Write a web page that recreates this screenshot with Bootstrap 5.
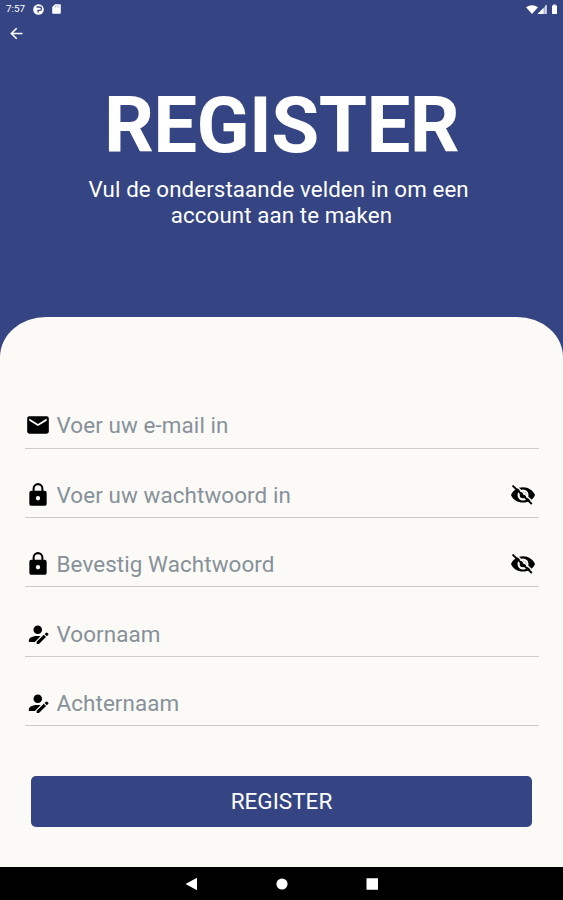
<!DOCTYPE html>
<html lang="nl">
<head>
<meta charset="utf-8">
<meta name="viewport" content="width=device-width, initial-scale=1">
<title>Register</title>
<link href="https://cdn.jsdelivr.net/npm/bootstrap@5.3.0/dist/css/bootstrap.min.css" rel="stylesheet">
<style>
body{font-family:Roboto,sans-serif;background:#354583;height:900px;overflow:hidden}
svg{display:block;flex:none}
.status{height:18px;padding:0 4px 0 6px;font-size:9.8px;line-height:18px}
.hero{height:298.5px}
.back{margin:9px 0 0 10px;width:13px;height:13px}
.title{font-size:78px;line-height:90px;font-weight:700;margin-top:41px;letter-spacing:-.6px}
.intro{font-size:22.3px;line-height:26.4px;margin-top:5px;letter-spacing:.1px}
.sheet{height:550.5px;background:#fbfaf6;border-radius:46px 46px 0 0/40px 40px 0 0;padding:62.7px 24.5px 0}
.field{height:69.4px;border-bottom:1.5px solid #cbcbc9;padding:24px 4px 0 0}
.field svg{margin-right:6px}
.field svg.eye{margin:0}
.field .form-control{font-size:22.4px;line-height:26px;color:#333;letter-spacing:.1px}
.field .form-control::placeholder{color:#87919a;opacity:1}
.submit{background:#354583!important;border-radius:5px;height:51.5px;margin:49.5px 6.5px 0;font-size:22.5px;width:501px;line-height:1}
.sysnav{height:33px}
</style>
<script src="https://cdn.jsdelivr.net/npm/bootstrap@5.3.0/dist/js/bootstrap.bundle.min.js"></script>
</head>
<body class="d-flex flex-column">
<svg width="0" height="0" class="position-absolute">
<symbol id="lock" viewBox="0 0 24 24"><path d="M18 8h-1V6A5 5 0 0 0 7 6v2H6a2 2 0 0 0-2 2v10a2 2 0 0 0 2 2h12a2 2 0 0 0 2-2V10a2 2 0 0 0-2-2zm-6 9a2 2 0 1 1 0-4 2 2 0 0 1 0 4zM8.900 8V6a3.100 3.100 0 0 1 6.200 0v2z"/></symbol>
<symbol id="person" viewBox="0 0 24 24"><circle cx="11.200" cy="6.300" r="4.700"/><path d="M1.500 19.500v-1.700c0-2.900 4.200-4.800 9.300-4.800 1.300 0 2.400.1 3.400.3L8 19.500z"/><path d="M10 21.800v-2.500l7.800-7.500 2.400 2.400-7.700 7.600zM18.600 11l1.700-1.500q.6-.5 1.200 0l1.200 1.200q.5.600 0 1.100L21.100 13.400z"/></symbol>
<symbol id="eyeoff" viewBox="0 0 24 20"><path fill-rule="evenodd" d="M0 10C2 5.300 6.500 2.200 12 2.200S22 5.300 24 10c-2 4.700-6.500 7.600-12 7.600S2 14.700 0 10zm12-5.500a5.500 5.500 0 1 0 0 11 5.500 5.500 0 0 0 0-11z"/><circle cx="12" cy="10" r="3.300"/><circle cx="13.300" cy="8.500" r="1.500" fill="#fbfaf6"/><path d="M3.300-.8 22.800 17.700" stroke="#fbfaf6" stroke-width="1.400"/><path d="M1.500.5 20.800 19" stroke="#000" stroke-width="1.800"/></symbol>
</svg>
<header class="status d-flex align-items-center text-white">
<span>7:57</span>
<svg width="11" height="11" viewBox="0 0 11 11" class="ms-2"><circle cx="5.500" cy="5.500" r="5.300" fill="#fff"/><path d="M3.500 3h3.300a1.700 1.700 0 0 1 0 3.400H5V8.500" fill="none" stroke="#354583" stroke-width="1.300"/></svg>
<svg width="9" height="10" viewBox="0 0 9 10" class="ms-2"><path d="M3 .3h5q.8 0 .8.800v7.800q0 .800-.8.800H1q-.8 0-.8-.8V3z" fill="#fff"/><path d="M3.500 1.500v2M5.200 1.500v2M6.900 1.500v2" stroke="#9aa4ca" stroke-width=".7"/></svg>
<svg width="33" height="11" viewBox="0 0 33 11" class="ms-auto"><path d="M0 3.300Q6 -.800 12 3.300L6 10z" fill="#fff"/><path d="M20.500 1v9h-9z" fill="#aab2d2"/><path d="M17.500 4v6h-6z" fill="#fff"/><path d="M20 1v9" stroke="#fff"/><path d="M26 1.500h1.300V.5h2.400v1H31V10h-5z" fill="#fff"/></svg>
</header>
<section class="hero d-flex flex-column align-items-center text-white">
<a href="#" class="back align-self-start" aria-label="Terug"><svg width="13" height="13" viewBox="0 0 13 13" fill="none" stroke="#fff" stroke-width="1.600"><path d="M12.500 6.500H1.500M6.700 1.200 1.400 6.500l5.300 5.300"/></svg></a>
<h1 class="title mb-0">REGISTER</h1>
<p class="intro text-center mb-0">Vul de onderstaande velden in om een&nbsp;<br>account aan te maken</p>
</section>
<main class="sheet">
<form>
<div class="field d-flex align-items-center"><svg width="26" height="26" viewBox="0 0 24 24"><path fill-rule="evenodd" d="M20 4H4a2 2 0 0 0-2 2v12a2 2 0 0 0 2 2h16a2 2 0 0 0 2-2V6a2 2 0 0 0-2-2zm0 4-8 5-8-5V6l8 5 8-5z"/></svg><input class="form-control border-0 bg-transparent p-0 shadow-none" type="email" placeholder="Voer uw e-mail in"></div>
<div class="field d-flex align-items-center"><svg width="26" height="26"><use href="#lock"/></svg><input class="form-control border-0 bg-transparent p-0 shadow-none" type="password" placeholder="Voer uw wachtwoord in"><svg class="eye" width="24" height="20"><use href="#eyeoff"/></svg></div>
<div class="field d-flex align-items-center"><svg width="26" height="26"><use href="#lock"/></svg><input class="form-control border-0 bg-transparent p-0 shadow-none" type="password" placeholder="Bevestig Wachtwoord"><svg class="eye" width="24" height="20"><use href="#eyeoff"/></svg></div>
<div class="field d-flex align-items-center"><svg width="26" height="26" viewBox="0 0 26 26"><use href="#person" x="2.500" y="3" width="22" height="22"/></svg><input class="form-control border-0 bg-transparent p-0 shadow-none" type="text" placeholder="Voornaam"></div>
<div class="field d-flex align-items-center"><svg width="26" height="26" viewBox="0 0 26 26"><use href="#person" x="2.500" y="3" width="22" height="22"/></svg><input class="form-control border-0 bg-transparent p-0 shadow-none" type="text" placeholder="Achternaam"></div>
<button type="button" class="submit btn text-white border-0 p-0">REGISTER</button>
</form>
</main>
<footer class="sysnav bg-black d-flex justify-content-center align-items-center">
<svg width="196" height="16" viewBox="0 0 196 16" fill="#fff"><path d="M1.500 8 13 1.800v12.400zM182.500 2.300h11.500v11.500h-11.500z"/><circle cx="98" cy="8" r="5.600"/></svg>
</footer>
</body>
</html>
